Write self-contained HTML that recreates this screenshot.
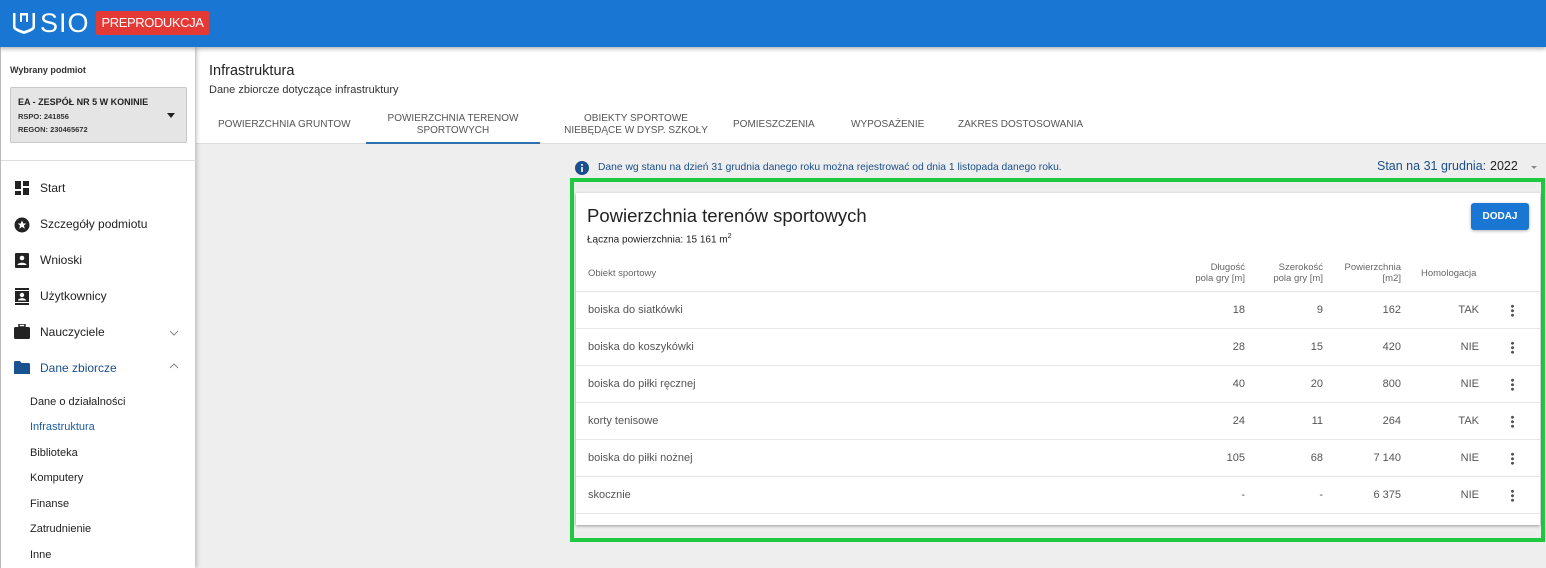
<!DOCTYPE html>
<html><head><meta charset="utf-8"><style>
*{box-sizing:border-box;margin:0;padding:0}
body{width:1546px;height:568px;overflow:hidden;background:#eeeeee;font-family:"Liberation Sans",Arial,sans-serif;color:#212121;position:relative}
.a{position:absolute;white-space:nowrap}
#hdr{left:0;top:0;width:1546px;height:47px;background:#1976d2;box-shadow:0 2px 4px rgba(0,0,0,.3);z-index:3}
#side{left:0;top:47px;width:195px;height:521px;background:#fff;border-left:1px solid #bbb;box-shadow:2px 0 4px rgba(0,0,0,.2);z-index:2}
.nav{font-size:12px;color:#222}
.sub{font-size:11px;color:#222;left:30px}
.tab{font-size:10px;color:#555;text-align:center;line-height:12px}
.th{font-size:9.5px;color:#666;text-align:right;line-height:11px}
.td{font-size:11px;color:#555}
.r{text-align:right}
.line{position:absolute;left:576px;width:964px;height:1px;background:#e6e6e6}
.dots{width:3px;height:13px;background:radial-gradient(circle,#555 1.4px,transparent 1.6px) 0 0/3px 4.5px repeat-y}
</style></head><body>
<div id="hdr" class="a">
 <svg class="a" style="left:12px;top:12px" width="24" height="23" viewBox="0 0 24 23"><path d="M1 1v14c0 3 5 5 11 7 6-2 11-4 11-7V1h-2.5v13.5c0 1.5-4 3-8.5 4.5-4.5-1.5-8.5-3-8.5-4.5V1z M8 1v9h2V3.5h4V10h2V1z" fill="#fff"/></svg>
 <div class="a" style="left:40px;top:8px;font-size:27px;color:#fff;letter-spacing:1px">SIO</div>
 <div class="a" style="left:96px;top:11px;width:113px;height:24px;background:#e53935;border-radius:2px;color:#fff;font-size:13px;letter-spacing:-0.4px;line-height:24px;text-align:center">PREPRODUKCJA</div>
</div>
<div id="side" class="a">
 <div class="a" style="left:9px;top:18px;font-size:9px;font-weight:bold;color:#333">Wybrany podmiot</div>
 <div class="a" style="left:9px;top:40px;width:177px;height:56px;background:#e5e5e5;border:1px solid #c8c8c8;border-radius:2px">
  <div class="a" style="left:7px;top:9px;font-size:9px;font-weight:bold;color:#222">EA - ZESPÓŁ NR 5 W KONINIE</div>
  <div class="a" style="left:7px;top:24px;font-size:7.5px;font-weight:bold;color:#333">RSPO: 241856</div>
  <div class="a" style="left:7px;top:37px;font-size:7.5px;font-weight:bold;color:#333">REGON: 230465672</div>
  <div class="a" style="left:156px;top:25px;width:0;height:0;border-left:4px solid transparent;border-right:4px solid transparent;border-top:5px solid #222"></div>
 </div>
 <div class="a" style="left:0;top:113px;width:195px;height:1px;background:#ddd"></div>
</div>
<div class="a" style="z-index:4;left:0;top:47px;width:196px;height:521px">
 <svg class="a" style="left:15px;top:134px" width="14" height="14"><rect x="0" y="0" width="6" height="8" fill="#222"/><rect x="8" y="0" width="6" height="5" fill="#222"/><rect x="0" y="10" width="6" height="4" fill="#222"/><rect x="8" y="7" width="6" height="7" fill="#222"/></svg>
 <div class="a nav" style="left:40px;top:134px">Start</div>
 <svg class="a" style="left:14px;top:170px" width="16" height="16"><circle cx="8" cy="8" r="7.5" fill="#222"/><path d="M8 3.5l1.3 3h3l-2.4 2 .9 3.2L8 9.9l-2.8 1.8.9-3.2-2.4-2h3z" fill="#fff"/></svg>
 <div class="a nav" style="left:40px;top:170px">Szczegóły podmiotu</div>
 <svg class="a" style="left:15px;top:205px" width="14" height="16"><rect x="0" y="1" width="14" height="15" rx="1" fill="#222"/><circle cx="7" cy="6" r="2.3" fill="#fff"/><path d="M2.5 13c0-3 9-3 9 0z" fill="#fff"/></svg>
 <div class="a nav" style="left:40px;top:206px">Wnioski</div>
 <svg class="a" style="left:15px;top:241px" width="14" height="17"><rect x="0" y="0" width="14" height="2" fill="#222"/><rect x="0" y="3" width="14" height="11" fill="#222"/><rect x="0" y="15" width="14" height="2" fill="#222"/><circle cx="7" cy="7" r="2.2" fill="#fff"/><path d="M3 12.5c0-3 8-3 8 0z" fill="#fff"/></svg>
 <div class="a nav" style="left:40px;top:242px">Użytkownicy</div>
 <svg class="a" style="left:14px;top:277px" width="16" height="15"><rect x="5" y="0" width="6" height="3" fill="none" stroke="#222" stroke-width="1.5"/><rect x="0" y="3" width="16" height="12" rx="1.5" fill="#222"/></svg>
 <div class="a nav" style="left:40px;top:278px">Nauczyciele</div>
 <svg class="a" style="left:169px;top:283px" width="10" height="6"><path d="M1 1l4 4 4-4" fill="none" stroke="#888" stroke-width="1"/></svg>
 <svg class="a" style="left:14px;top:314px" width="16" height="13"><path d="M0 1.5Q0 0 1.5 0H6l1.5 2H14.5Q16 2 16 3.5V13H0z" fill="#1a5291"/></svg>
 <div class="a nav" style="left:40px;top:314px;color:#1a4f8b">Dane zbiorcze</div>
 <svg class="a" style="left:169px;top:316px" width="10" height="6"><path d="M1 5l4-4 4 4" fill="none" stroke="#888" stroke-width="1"/></svg>
 <div class="a sub" style="top:349px">Dane o działalności</div>
 <div class="a sub" style="top:374px;color:#1a5c9c">Infrastruktura</div>
 <div class="a sub" style="top:400px">Biblioteka</div>
 <div class="a sub" style="top:425px">Komputery</div>
 <div class="a sub" style="top:451px">Finanse</div>
 <div class="a sub" style="top:476px">Zatrudnienie</div>
 <div class="a sub" style="top:502px">Inne</div>
</div>
<div class="a" style="left:196px;top:47px;width:1350px;height:97px;background:#fff;border-bottom:1px solid #ddd"></div>
<div class="a" style="left:209px;top:63px;font-size:14.5px;color:#222">Infrastruktura</div>
<div class="a" style="left:209px;top:84px;font-size:11px;color:#333">Dane zbiorcze dotyczące infrastruktury</div>
<div class="a tab" style="left:218px;top:119px">POWIERZCHNIA GRUNTOW</div>
<div class="a tab" style="left:366px;top:113px;width:174px">POWIERZCHNIA TERENOW<br>SPORTOWYCH</div>
<div class="a" style="left:366px;top:142px;width:174px;height:2px;background:#2f6fb0"></div>
<div class="a tab" style="left:553px;top:113px;width:166px">OBIEKTY SPORTOWE<br>NIEBĘDĄCE W DYSP. SZKOŁY</div>
<div class="a tab" style="left:733px;top:119px">POMIESZCZENIA</div>
<div class="a tab" style="left:851px;top:119px">WYPOSAŻENIE</div>
<div class="a tab" style="left:958px;top:119px">ZAKRES DOSTOSOWANIA</div>
<svg class="a" style="left:575px;top:161px" width="14" height="14"><circle cx="7" cy="7" r="7" fill="#1a4f8b"/><rect x="6.2" y="6" width="1.6" height="5" fill="#fff"/><circle cx="7" cy="3.9" r="1" fill="#fff"/></svg>
<div class="a" style="left:598px;top:162px;font-size:10.3px;color:#1a4f8b">Dane wg stanu na dzień 31 grudnia danego roku można rejestrować od dnia 1 listopada danego roku.</div>
<div class="a" style="left:1377px;top:159px;font-size:12.5px;color:#1a4f8b">Stan na 31 grudnia:</div>
<div class="a" style="left:1490px;top:159px;font-size:12.5px;color:#222">2022</div>
<div class="a" style="left:1531px;top:166px;border-left:3px solid transparent;border-right:3px solid transparent;border-top:3px solid #888"></div>
<div class="a" style="left:570px;top:178px;width:975px;height:364px;border:4px solid #1ec940"></div>
<div class="a" style="left:576px;top:193px;width:964px;height:332px;background:#fff;box-shadow:0 1px 3px rgba(0,0,0,.35)"></div>
<div class="a" style="left:587px;top:205px;font-size:18.5px;color:#222">Powierzchnia terenów sportowych</div>
<div class="a" style="left:587px;top:233px;font-size:10px;color:#222">Łączna powierzchnia: 15 161 m<sup style="font-size:7px">2</sup></div>
<div class="a" style="left:1471px;top:203px;width:58px;height:27px;background:#1976d2;border-radius:3px;box-shadow:0 1px 3px rgba(0,0,0,.3);color:#fff;font-size:10px;font-weight:bold;line-height:27px;text-align:center">DODAJ</div>
<div class="a th" style="left:588px;top:268px;text-align:left">Obiekt sportowy</div>
<div class="a th" style="left:1175px;top:262px;width:70px">Długość<br>pola gry [m]</div>
<div class="a th" style="left:1253px;top:262px;width:70px">Szerokość<br>pola gry [m]</div>
<div class="a th" style="left:1331px;top:262px;width:70px">Powierzchnia<br>[m2]</div>
<div class="a th" style="left:1421px;top:268px;text-align:left">Homologacja</div>
<div class="line" style="top:291px"></div>
<div class="line" style="top:328px"></div>
<div class="line" style="top:365px"></div>
<div class="line" style="top:402px"></div>
<div class="line" style="top:439px"></div>
<div class="line" style="top:476px"></div>
<div class="line" style="top:513px"></div>
<div class="a" style="left:0;top:304px;width:1546px">
 <div class="a td" style="left:588px;top:0">boiska do siatkówki</div><div class="a td r" style="left:1175px;width:70px">18</div><div class="a td r" style="left:1253px;width:70px">9</div><div class="a td r" style="left:1331px;width:70px">162</div><div class="a td r" style="left:1409px;width:70px">TAK</div><div class="a dots" style="left:1511px;top:0"></div>
</div>
<div class="a" style="left:0;top:341px;width:1546px">
 <div class="a td" style="left:588px;top:0">boiska do koszykówki</div><div class="a td r" style="left:1175px;width:70px">28</div><div class="a td r" style="left:1253px;width:70px">15</div><div class="a td r" style="left:1331px;width:70px">420</div><div class="a td r" style="left:1409px;width:70px">NIE</div><div class="a dots" style="left:1511px;top:0"></div>
</div>
<div class="a" style="left:0;top:378px;width:1546px">
 <div class="a td" style="left:588px;top:0">boiska do piłki ręcznej</div><div class="a td r" style="left:1175px;width:70px">40</div><div class="a td r" style="left:1253px;width:70px">20</div><div class="a td r" style="left:1331px;width:70px">800</div><div class="a td r" style="left:1409px;width:70px">NIE</div><div class="a dots" style="left:1511px;top:0"></div>
</div>
<div class="a" style="left:0;top:415px;width:1546px">
 <div class="a td" style="left:588px;top:0">korty tenisowe</div><div class="a td r" style="left:1175px;width:70px">24</div><div class="a td r" style="left:1253px;width:70px">11</div><div class="a td r" style="left:1331px;width:70px">264</div><div class="a td r" style="left:1409px;width:70px">TAK</div><div class="a dots" style="left:1511px;top:0"></div>
</div>
<div class="a" style="left:0;top:452px;width:1546px">
 <div class="a td" style="left:588px;top:0">boiska do piłki nożnej</div><div class="a td r" style="left:1175px;width:70px">105</div><div class="a td r" style="left:1253px;width:70px">68</div><div class="a td r" style="left:1331px;width:70px">7 140</div><div class="a td r" style="left:1409px;width:70px">NIE</div><div class="a dots" style="left:1511px;top:0"></div>
</div>
<div class="a" style="left:0;top:489px;width:1546px">
 <div class="a td" style="left:588px;top:0">skocznie</div><div class="a td r" style="left:1175px;width:70px">-</div><div class="a td r" style="left:1253px;width:70px">-</div><div class="a td r" style="left:1331px;width:70px">6 375</div><div class="a td r" style="left:1409px;width:70px">NIE</div><div class="a dots" style="left:1511px;top:0"></div>
</div>
</body></html>
